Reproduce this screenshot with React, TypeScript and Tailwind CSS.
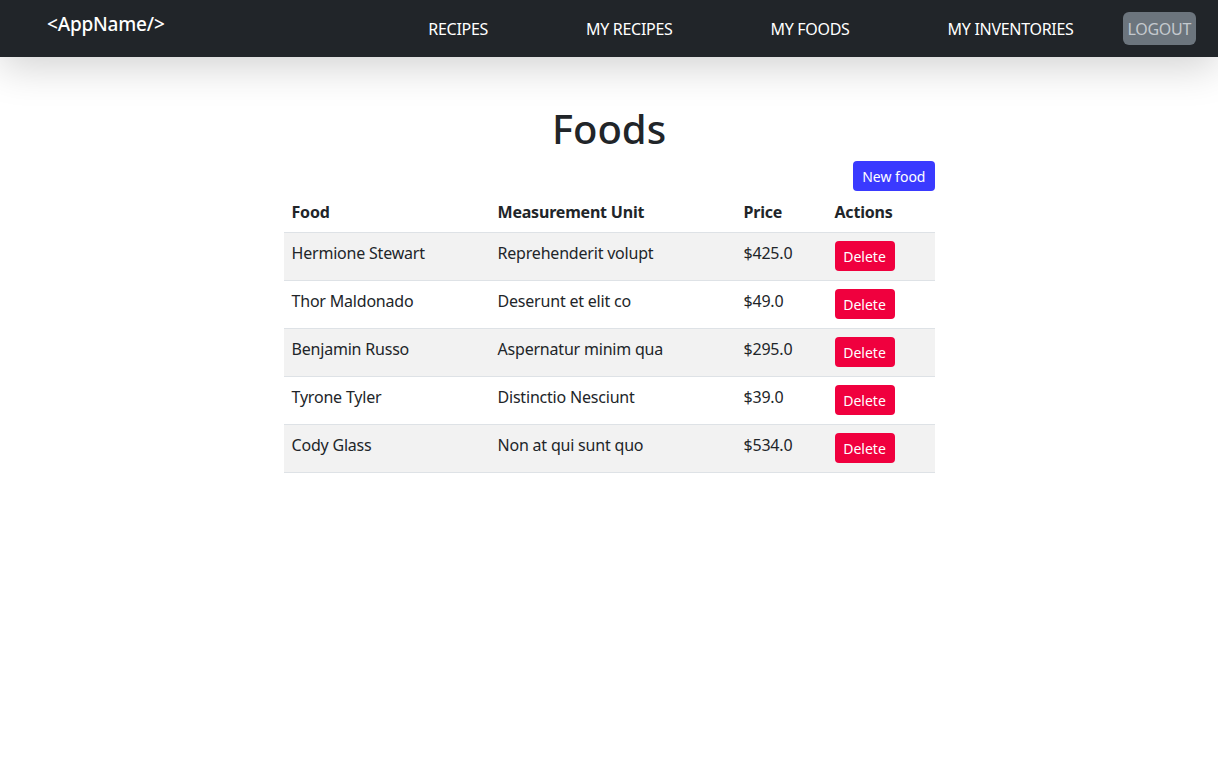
import React from 'react';

const foods = [
    { name: 'Hermione Stewart', unit: 'Reprehenderit volupt', price: '$425.0' },
    { name: 'Thor Maldonado', unit: 'Deserunt et elit co', price: '$49.0' },
    { name: 'Benjamin Russo', unit: 'Aspernatur minim qua', price: '$295.0' },
    { name: 'Tyrone Tyler', unit: 'Distinctio Nesciunt', price: '$39.0' },
    { name: 'Cody Glass', unit: 'Non at qui sunt quo', price: '$534.0' },
];

const links = ['RECIPES', 'MY RECIPES', 'MY FOODS', 'MY INVENTORIES'];

export default function App() {
    return (
        <div className="min-h-screen bg-white text-[#212529] font-['Noto_Sans',sans-serif]">
            {/* Navbar */}
            <nav className="relative z-10 h-[57px] bg-[#212529] flex items-center shadow-[0_10px_40px_rgba(0,0,0,0.18)]">
                <a className="ml-[47px] text-[19px] font-medium text-white leading-none mb-[9px] tracking-[-0.2px]">&lt;AppName/&gt;</a>
                <ul className="ml-auto flex items-center">
                    {links.map((link) => (
                        <li key={link} className="px-[49px]">
                            <a className="text-white text-[16px] tracking-[-0.3px]">{link}</a>
                        </li>
                    ))}
                    <li className="mr-[22px]">
                        <button className="h-[33px] px-[5px] rounded-[6px] bg-[#6c757d] text-[#c4c9ce] text-[16px] tracking-[-0.3px]">
                            LOGOUT
                        </button>
                    </li>
                </ul>
            </nav>

            {/* Content */}
            <main className="w-[651px] mx-auto pt-[48px]">
                <h1 className="text-center text-[40px] font-medium leading-[1.2]">Foods</h1>
                <div className="flex justify-end mt-[8px]">
                    <button className="h-[30px] px-[9px] rounded-[4px] bg-[#3a3aff] text-white text-[14px]">
                        New food
                    </button>
                </div>
                <table className="w-full mt-[1px] text-[16px] border-collapse tracking-[-0.2px]">
                    <thead>
                        <tr className="border-b border-[#dee2e6]">
                            <th className="w-[206px] text-left font-bold px-2 py-2">Food</th>
                            <th className="w-[246px] text-left font-bold px-2 py-2">Measurement Unit</th>
                            <th className="w-[91px] text-left font-bold px-2 py-2">Price</th>
                            <th className="text-left font-bold px-2 py-2">Actions</th>
                        </tr>
                    </thead>
                    <tbody>
                        {foods.map((food, index) => (
                            <tr
                                key={food.name}
                                className={`border-b border-[#dee2e6] h-[48px] ${index % 2 === 0 ? 'bg-[#f2f2f2]' : 'bg-white'}`}
                            >
                                <td className="px-2 align-top pt-[8px]">{food.name}</td>
                                <td className="px-2 align-top pt-[8px]">{food.unit}</td>
                                <td className="px-2 align-top pt-[8px]">{food.price}</td>
                                <td className="px-2 align-top pt-[8px]">
                                    <button className="h-[30px] w-[60px] rounded-[4px] bg-[#f0003e] text-white text-[14px] tracking-normal">
                                        Delete
                                    </button>
                                </td>
                            </tr>
                        ))}
                    </tbody>
                </table>
            </main>
        </div>
    );
}
